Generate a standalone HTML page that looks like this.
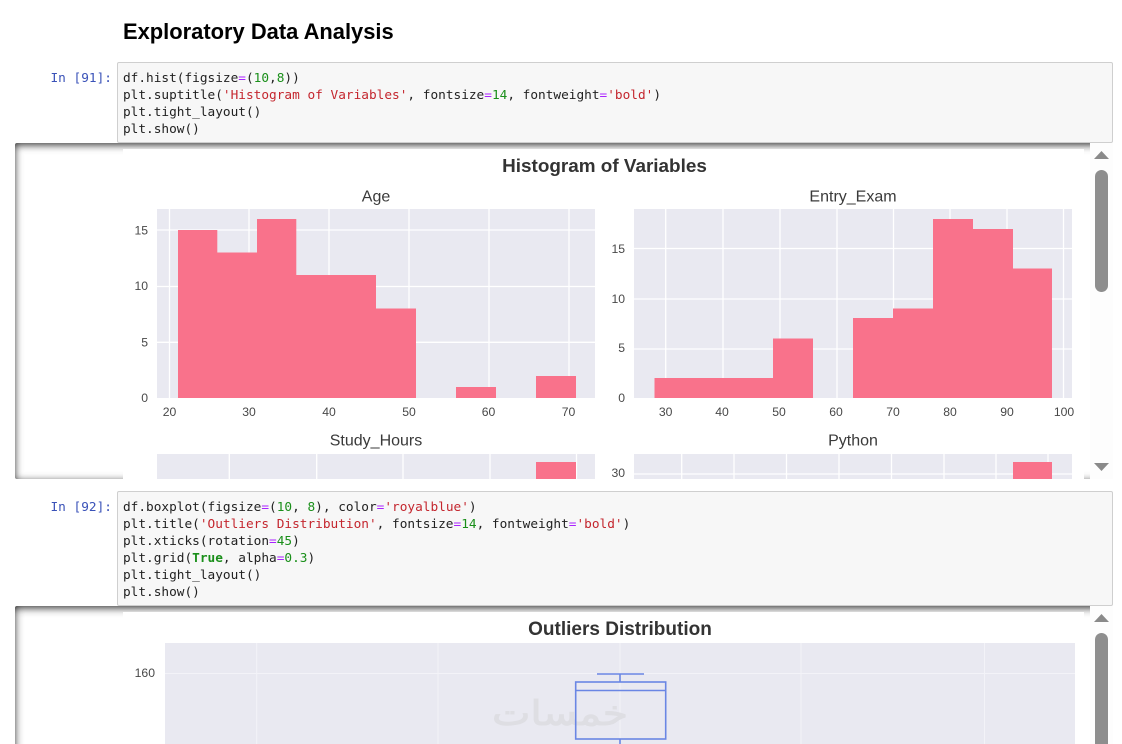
<!DOCTYPE html>
<html><head><meta charset="utf-8"><style>
html,body{margin:0;padding:0;background:#fff;width:1122px;height:744px;overflow:hidden;position:relative}
h1{position:absolute;left:123px;top:19px;margin:0;font:bold 21.92px/26px "Liberation Sans",Arial,sans-serif;color:#000;white-space:nowrap}
.p{position:absolute;left:0;width:112px;text-align:right;font:12.78px/17px "DejaVu Sans Mono",monospace;color:#3a52b8;white-space:pre}
.c{position:absolute;left:117px;width:989px;background:#f7f7f7;border:1px solid #cfcfcf;border-radius:2px;font:12.78px/17px "DejaVu Sans Mono",monospace;color:#222;white-space:pre;padding:7px 0 0 5px;box-sizing:content-box;z-index:5}
.c .s{color:#c4262e}.c .n{color:#1a8f1a}.c .o{color:#a2f}.c b{color:#1a8f1a}
.o1{position:absolute;left:15px;width:1098px;overflow:hidden;border-radius:2px;box-shadow:inset 0 2px 8px rgba(0,0,0,.8);background:#fff}
.o2{position:absolute;left:15px;width:1098px;border-radius:2px 2px 0 0;background:
linear-gradient(to bottom,rgba(0,0,0,.55) 0,rgba(0,0,0,.4) 2px,rgba(0,0,0,.25) 4px,rgba(0,0,0,.13) 6px,rgba(0,0,0,.05) 8px,rgba(0,0,0,.02) 10px,rgba(0,0,0,0) 12px),
linear-gradient(to right,rgba(0,0,0,.4) 0,rgba(0,0,0,.32) 1px,rgba(0,0,0,.25) 2px,rgba(0,0,0,.18) 3px,rgba(0,0,0,.13) 4px,rgba(0,0,0,.05) 6px,rgba(0,0,0,.02) 8px,rgba(0,0,0,0) 10px),#fff}
.w{position:absolute;background:#fff}
.sb{position:absolute;left:1090px;width:23px;background:#fdfdfd}
.th{position:absolute;left:1095px;width:13px;background:#8e8e8e;border-radius:7px}
svg{position:absolute;left:0;top:0}
svg text{font-family:"Liberation Sans",Arial,sans-serif}
.t{font-size:12.2px;fill:#484848}
.h{font-size:16px;fill:#3a3a3a}
</style></head><body>
<h1>Exploratory Data Analysis</h1>
<div class="p" style="top:70px">In [91]:</div>
<div class="c" style="top:62px;height:72px">df.hist(figsize<span class="o">=</span>(<span class="n">10</span>,<span class="n">8</span>))
plt.suptitle(<span class="s">'Histogram of Variables'</span>, fontsize<span class="o">=</span><span class="n">14</span>, fontweight<span class="o">=</span><span class="s">'bold'</span>)
plt.tight_layout()
plt.show()</div>

<div class="o1" style="top:143px;height:336px"></div>
<div class="w" style="left:123px;top:149px;width:961px;height:330px"></div>
<div class="sb" style="top:143px;height:336px"></div>

<div class="p" style="top:499px">In [92]:</div>
<div class="c" style="top:491px;height:106px">df.boxplot(figsize<span class="o">=</span>(<span class="n">10</span>, <span class="n">8</span>), color<span class="o">=</span><span class="s">'royalblue'</span>)
plt.title(<span class="s">'Outliers Distribution'</span>, fontsize<span class="o">=</span><span class="n">14</span>, fontweight<span class="o">=</span><span class="s">'bold'</span>)
plt.xticks(rotation<span class="o">=</span><span class="n">45</span>)
plt.grid(<b>True</b>, alpha<span class="o">=</span><span class="n">0.3</span>)
plt.tight_layout()
plt.show()</div>

<div class="o2" style="top:606px;height:138px"></div>
<div class="w" style="left:123px;top:612px;width:961px;height:132px"></div>
<div class="sb" style="top:606px;height:138px"></div>

<svg width="1122" height="744" viewBox="0 0 1122 744" style="z-index:2;filter:blur(.25px)">
<text x="604.500" y="172" text-anchor="middle" font-weight="bold" font-size="18.900" fill="#333">Histogram of Variables</text>
<text x="376" y="201.500" text-anchor="middle" class="h">Age</text>
<text x="853" y="201.500" text-anchor="middle" class="h">Entry_Exam</text>
<text x="376" y="445.500" text-anchor="middle" class="h">Study_Hours</text>
<text x="853" y="445.500" text-anchor="middle" class="h">Python</text>

<rect x="157" y="209" width="438" height="189" fill="#e9e9f1"/>
<g stroke="#fff" stroke-width="1.3" fill="none">
<path d="M169.500 209V398M249 209V398M329 209V398M409 209V398M489 209V398M569 209V398M157 342.300H595M157 286.500H595M157 230H595"/>
</g>
<path fill="#f9728b" d="M178 398V230H217.300V252.500H257V219H296.300V275H376V308.500H416V398ZM456 398V387H496V398ZM536 398V376H576V398Z"/>
<g class="t" text-anchor="end">
<text x="148" y="402">0</text><text x="148" y="346.500">5</text><text x="148" y="290">10</text><text x="148" y="234.500">15</text>
</g>
<g class="t" text-anchor="middle">
<text x="169.500" y="416">20</text><text x="249" y="416">30</text><text x="329" y="416">40</text><text x="409" y="416">50</text><text x="488.500" y="416">60</text><text x="568.500" y="416">70</text>
</g>

<rect x="634" y="209" width="438" height="189" fill="#e9e9f1"/>
<g stroke="#fff" stroke-width="1.3" fill="none">
<path d="M665.700 209V398M723 209V398M780 209V398M837 209V398M893.500 209V398M950 209V398M1007 209V398M1063.500 209V398M634 349H1072M634 299H1072M634 248.500H1072"/>
</g>
<path fill="#f9728b" d="M654.500 398V378H773V338.500H813V398ZM853 398V318H893V308.500H933V219H973V229H1013V268.500H1052V398Z"/>
<g class="t" text-anchor="end">
<text x="625" y="402">0</text><text x="625" y="352">5</text><text x="625" y="303">10</text><text x="625" y="253">15</text>
</g>
<g class="t" text-anchor="middle">
<text x="665.700" y="416">30</text><text x="722" y="416">40</text><text x="779" y="416">50</text><text x="836" y="416">60</text><text x="893" y="416">70</text><text x="950" y="416">80</text><text x="1007" y="416">90</text><text x="1064" y="416">100</text>
</g>

<rect x="157" y="454" width="438" height="25" fill="#e9e9f1"/>
<path stroke="#fff" stroke-width="1.3" d="M229.300 454V479M316.700 454V479M403 454V479M490 454V479M576.500 454V479"/>
<rect x="536" y="462" width="40" height="17" fill="#f9728b"/>
<rect x="634" y="454" width="438" height="25" fill="#e9e9f1"/>
<path stroke="#fff" stroke-width="1.3" d="M681.700 454V479M734 454V479M786.500 454V479M839 454V479M891.500 454V479M944 454V479M996 454V479M1048 454V479M634 474H1072"/>
<rect x="1013" y="462" width="39" height="17" fill="#f9728b"/>
<text x="625" y="477" text-anchor="end" class="t">30</text>

<text x="620" y="635" text-anchor="middle" font-weight="bold" font-size="19" fill="#333">Outliers Distribution</text>
<rect x="165" y="643" width="910" height="101" fill="#e9e9f1"/>
<path stroke="#f3f3f8" stroke-width="1" d="M256.700 643V744M438 643V744M620 643V744M801 643V744M984.500 643V744M165 673.500H1075"/>
<text x="155" y="677" text-anchor="end" class="t">160</text>
<text x="560" y="725" text-anchor="middle" style="font-family:'DejaVu Sans',sans-serif;font-size:34px;fill:#dedee3;stroke:#dedee3;stroke-width:1" direction="rtl" textLength="136" lengthAdjust="spacingAndGlyphs">خمسات</text>
<g stroke="#6a86e4" stroke-width="1.6" fill="none">
<rect x="575.700" y="682" width="90" height="57"/>
<path d="M575.700 690.500H665.700M597 674H644M620 674V682M620 739V744"/>
</g>
</svg>

<svg width="1122" height="744" viewBox="0 0 1122 744" style="z-index:3">
<g fill="#8a8a8a">
<path d="M1094 159L1101.500 151L1109 159Z"/>
<path d="M1094 463L1109 463L1101.500 471Z"/>
<path d="M1094 622L1101.500 614L1109 622Z"/>
</g>
</svg>
<div class="th" style="top:170px;height:122px;z-index:3"></div>
<div class="th" style="top:633px;height:111px;border-radius:7px 7px 0 0;z-index:3"></div>
</body></html>
